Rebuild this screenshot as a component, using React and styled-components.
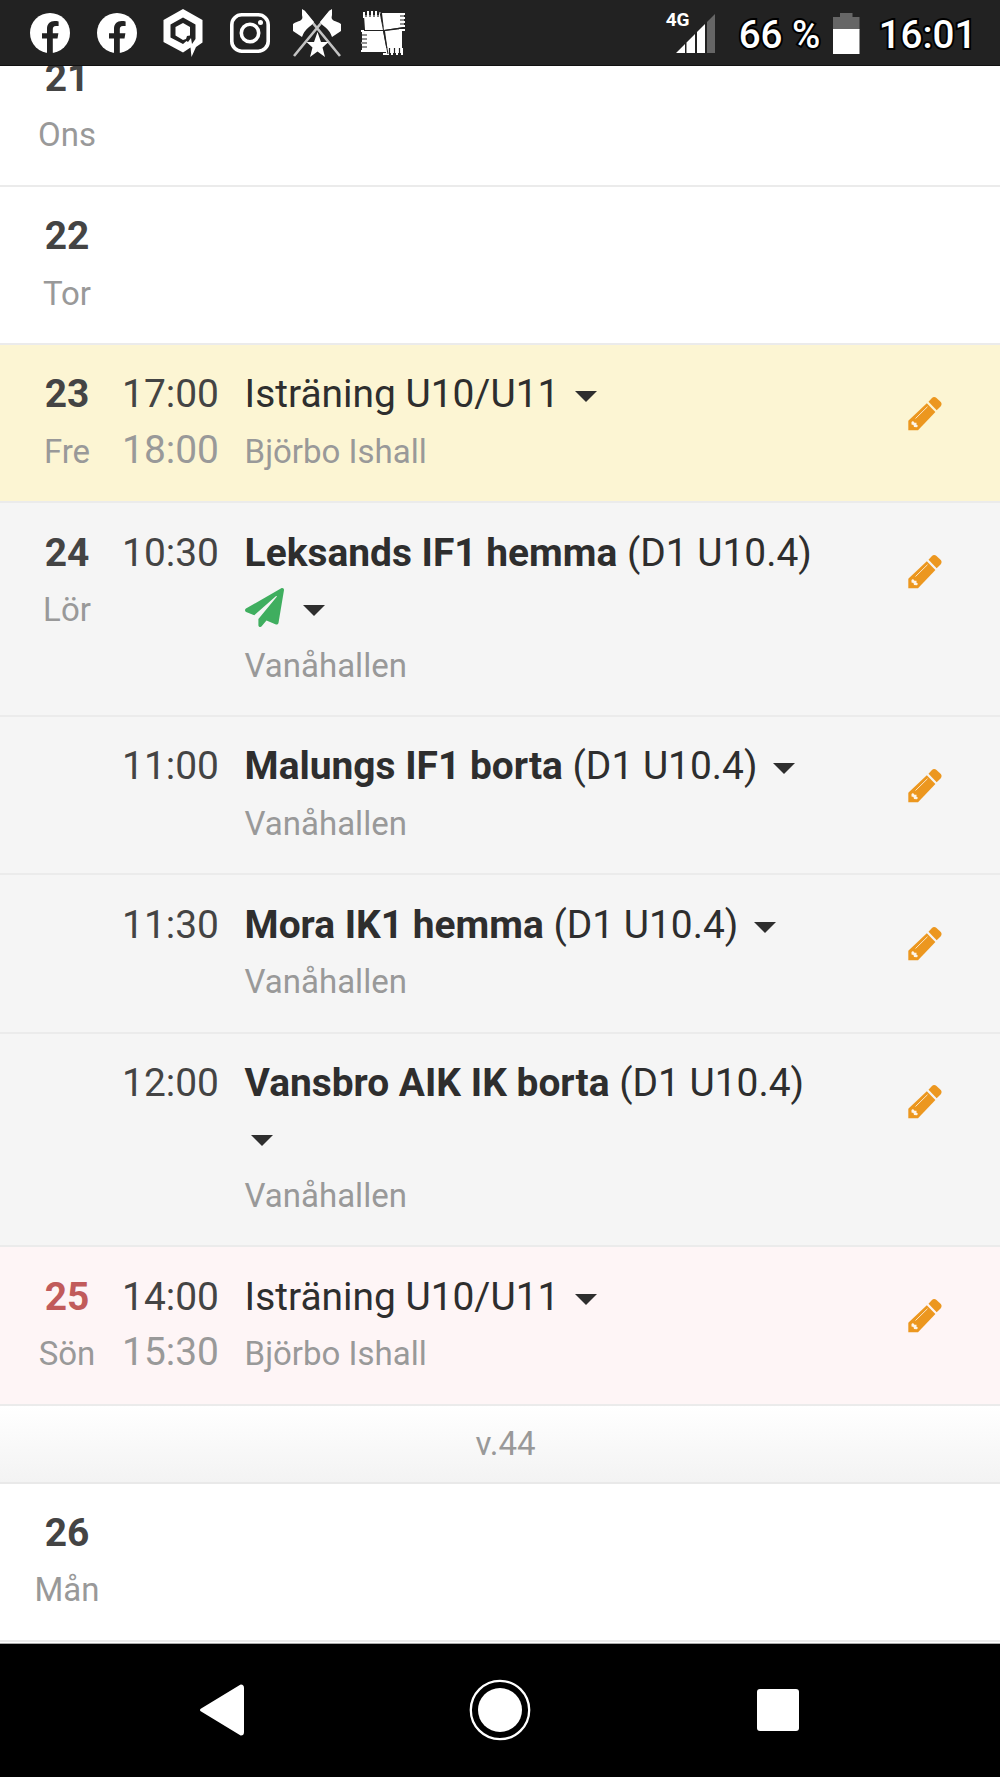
import React from 'react'
import styled, { createGlobalStyle } from 'styled-components'

const days = [
  { date: '21', day: 'Ons' },
  { date: '22', day: 'Tor' },
  { date: '23', day: 'Fre', tone: 'today', start: '17:00', end: '18:00', title: 'Isträning U10/U11', place: 'Björbo Ishall' },
  { date: '24', day: 'Lör', tone: 'saturday', start: '10:30', match: 'Leksands IF1 hemma', series: '(D1 U10.4)', sent: true, place: 'Vanåhallen' },
  { tone: 'saturday', start: '11:00', match: 'Malungs IF1 borta', series: '(D1 U10.4)', place: 'Vanåhallen' },
  { tone: 'saturday', start: '11:30', match: 'Mora IK1 hemma', series: '(D1 U10.4)', place: 'Vanåhallen' },
  { tone: 'saturday', start: '12:00', match: 'Vansbro AIK IK borta', series: '(D1 U10.4)', place: 'Vanåhallen' },
  { date: '25', day: 'Sön', tone: 'sunday', start: '14:00', end: '15:30', title: 'Isträning U10/U11', place: 'Björbo Ishall' },
]

const tones = {
  today: '#fcf5d3',
  saturday: '#f5f5f5',
  sunday: '#fef5f6',
}

const facebook = (
  <svg width="40" height="40" viewBox="0 0 40 40">
    <circle cx="20" cy="20" r="20" fill="#fff" />
    <path d="M17 40V25.500h-5v-5.300h5v-4.400c0-5 3-7.800 7.600-7.800 1.500 0 3 .2 4 .4v4.700h-2.600c-2.500 0-3.200 1.500-3.200 3.100v4h5.600l-.9 5.300h-4.700V40z" fill="#222" />
  </svg>
)

const hexagon = (
  <svg width="40" height="48" viewBox="0 0 40 48">
    <path d="M20 0L39.500 11V33.500L33 38L28.500 48L27.500 38.500L20 43.500L.5 33V11z" fill="#fff" />
    <path d="M20 8.500L32.500 15.500V30L29 35L28 29L25 33L23.500 32L20 35L7.500 28.500V15.500z" fill="#222" />
    <path d="M20 14L27 18V26.500L24 27L23 30L20 31L12.500 26.500V18z" fill="#fff" />
  </svg>
)

const instagram = (
  <svg width="40" height="40" viewBox="0 0 40 40" fill="none" stroke="#fff" strokeWidth="3.600">
    <rect x="1.800" y="1.800" width="36.400" height="36.400" rx="10" />
    <circle cx="20" cy="20" r="8.700" />
    <circle cx="30.500" cy="9.500" r="2.500" fill="#fff" stroke="none" />
  </svg>
)

const flags = (
  <svg width="48" height="48" viewBox="0 0 48 48" fill="#fff">
    <path d="M1 47L38 2M47 47L10 2" stroke="#c4c4c4" strokeWidth="2.600" />
    <path d="M9 0L12 2L21 13Q19 16 16 18Q11 22 9 28L0 22V15C5 11 11 13 9 6z" />
    <path d="M39 0L36 2L27 13Q29 16 32 18Q37 22 39 28L48 22V15C43 11 37 13 39 6z" />
    <path d="M24.500 23L28 33H35.500L29.500 38.500L32 48L24.500 42.500L17 48L19.500 38.500L13.500 33H21z" />
  </svg>
)

const patch = (
  <svg width="44" height="46" viewBox="0 0 44 46">
    <path d="M3 5H19L23 20H4z M21 3H43V17L23 20z M1 21H22L26 42H1z M24 21L41 19V43H27z" fill="#fff" />
    <path d="M3 2V8M7 1V8M11 1V8M15 1V8M19 2V8M38 4H44M38 8H44M38 12H44M38 16H44M38 20H44M0 21H6M22 44H28M26 38V45M31 38V45M36 38V45M41 38V45M0 41H5M0 33H5" stroke="#fff" strokeWidth="2" />
    <path d="M19 2L27 44M3 20.500H23L43 17.500" stroke="#222" strokeWidth="1" fill="none" />
    <path d="M5 3V7M9 3V7M13 3V7M17 3V7M39 6H43M39 10H43M39 14H43M0 25H6M0 29H6M0 33H6M0 37H6M28.500 38V43M33.500 38V43M38.500 38V43" stroke="#222" strokeWidth="1.200" />
  </svg>
)

const signal = (
  <svg width="39" height="39" viewBox="0 0 39 39" fill="#fff">
    <path d="M0 39L9 30V39z M10.500 28.500L19 20V39H10.500z M21 18L29 10V39H21z" />
    <path d="M31 8L39 0V39H31z" fill="#666" />
  </svg>
)

const battery = (
  <svg width="27" height="41" viewBox="0 0 27 41">
    <path d="M7 0H19.500V4H26.500V17H0V4H7z" fill="#666" />
    <path d="M0 16H26.500V41H0z" fill="#fff" />
  </svg>
)

const pencil = (
  <svg width="34" height="34" viewBox="0 0 34 34">
    <path d="M23.500 1.500Q26-1 28.500 1L32.800 5Q34.500 7.300 32.500 9.500L28.700 13.200L20.500 4.800z" fill="#ec971f" />
    <path d="M18.800 6.300L27.400 14.900L10 33.300H.3V23.800z" fill="#ec971f" />
    <path d="M7.500 21.500L19.500 9.700" stroke="#fff" strokeOpacity=".75" strokeWidth="1" />
    <path d="M3.500 25L5 24L6.500 25.800H8.500V27.800L10 28.700L9 30.300L6 30L5.500 28L3.500 27.500z" fill="#fff" fillOpacity=".9" />
  </svg>
)

const plane = (
  <svg width="39" height="39" viewBox="0 0 512 512">
    <path d="M476 3.200L12.500 270.600c-18.100 10.400-15.800 35.600 2.200 43.200L121 358.400l287.300-253.200c5.500-4.900 13.300 2.600 8.600 8.300L176 407v80.500c0 23.600 28.500 32.900 42.500 15.800L282 426l124.600 52.200c14.200 6 30.400-2.900 33-18.200l72-432C515 7.800 493.300-6.800 476 3.200z" fill="#3fae5f" />
  </svg>
)

const back = (
  <svg width="46" height="54" viewBox="0 0 46 54">
    <path d="M42 3L2.500 27L42 51Q43.500 51 43.500 49V5Q43.500 3 42 3z" fill="#fff" stroke="#fff" strokeWidth="3" strokeLinejoin="round" />
  </svg>
)

const home = (
  <svg width="62" height="62" viewBox="0 0 62 62">
    <circle cx="31" cy="31" r="29.200" fill="none" stroke="#fff" strokeWidth="2.300" />
    <circle cx="31" cy="31" r="22" fill="#fff" />
  </svg>
)

const recent = (
  <svg width="42" height="42" viewBox="0 0 42 42">
    <rect width="42" height="42" rx="3" fill="#fff" />
  </svg>
)

function EventRow({ item }) {
  return (
    <Row $tone={item.tone}>
      <DateCell>
        <DayNumber $red={item.tone === 'sunday'}>{item.date}</DayNumber>
        <div><Muted>{item.day}</Muted></div>
      </DateCell>
      <TimeCell>
        <div>{item.start}</div>
        <EndTime>{item.end}</EndTime>
      </TimeCell>
      {item.start && (
        <EventCell>
          <Title>
            {item.match && <b>{item.match}</b>} {item.title || item.series}{' '}
            {item.sent && <Sent>{plane}</Sent>}{' '}
            <Caret />
          </Title>
          <div><Muted>{item.place}</Muted></div>
        </EventCell>
      )}
      {item.start && <EditButton aria-label="Redigera">{pencil}</EditButton>}
    </Row>
  )
}

function App() {
  return (
    <Phone>
      <GlobalStyle />
      <StatusBar>
        <Notifications>
          <Slot>{facebook}</Slot>
          <Slot>{facebook}</Slot>
          <Slot>{hexagon}</Slot>
          <Slot>{instagram}</Slot>
          <Slot>{flags}</Slot>
          <Slot>{patch}</Slot>
        </Notifications>
        <System>
          <Network>
            <span>4G</span>
            {signal}
          </Network>
          <StatusText $width="82px">66 %</StatusText>
          {battery}
          <StatusText $width="95px">16:01</StatusText>
        </System>
      </StatusBar>
      <Calendar>
        <Rows>
          {days.map((item, index) => <EventRow key={index} item={item} />)}
          <Week><Muted>v.44</Muted></Week>
          <EventRow item={{ date: '26', day: 'Mån' }} />
        </Rows>
      </Calendar>
      <NavBar>
        <NavButton>{back}</NavButton>
        <NavButton>{home}</NavButton>
        <NavButton>{recent}</NavButton>
      </NavBar>
    </Phone>
  )
}

const GlobalStyle = createGlobalStyle`
  * {
    box-sizing: border-box;
  }

  body {
    margin: 0;
    background: #fff;
  }

  svg {
    display: block;
    flex-shrink: 0;
  }
`;

const Phone = styled.div`
  display: flex;
  flex-direction: column;
  width: 1000px;
  height: 1777px;
  overflow: hidden;
  font-family: Roboto, sans-serif;
  color: #444;
`;

const StatusBar = styled.header`
  display: flex;
  justify-content: space-between;
  flex: 0 0 66px;
  padding: 1px 26.300px 0 16.700px;
  color: #fff;
  background: #222;
  border-bottom: 1px solid #111;
`;

const Notifications = styled.div`
  display: flex;
  align-items: center;
`;

const Slot = styled.div`
  display: flex;
  justify-content: center;
  width: 66.700px;
`;

const System = styled.div`
  display: flex;
  align-items: center;
`;

const Network = styled.div`
  display: flex;
  margin-right: 24px;

  span {
    width: 23px;
    margin: -5px -13px 0 0;
    font-size: 19px;
    font-weight: 700;
    line-height: 22px;
    white-space: nowrap;
  }
`;

const StatusText = styled.span`
  width: ${props => props.$width};
  margin-right: 12px;
  padding-top: 3px;
  font-size: 38.500px;
  font-weight: 500;
  white-space: nowrap;
  paint-order: stroke;
  -webkit-text-stroke: 4px #000;

  &:last-child {
    margin: 0 0 0 19px;
  }
`;

const Calendar = styled.main`
  flex: 0 0 1578px;
  overflow: hidden;
  border-bottom: 1px solid #aaa;
`;

const Rows = styled.div`
  margin-top: -37.600px;
`;

const Row = styled.section`
  display: grid;
  grid-template-columns: 100px 107px 590px 1fr;
  min-height: 158.300px;
  padding: 21.300px 0 24px 17px;
  font-size: 38.900px;
  line-height: 55.500px;
  background: ${props => tones[props.$tone] || '#fff'};
  border-bottom: 2px solid #ebebeb;
`;

const DateCell = styled.div`
  text-align: center;
`;

const DayNumber = styled.div`
  font-weight: 700;
  color: ${props => props.$red ? '#c15b5b' : '#444'};
`;

const TimeCell = styled.div`
  text-align: center;
`;

const EndTime = styled.div`
  color: #999;
`;

const EventCell = styled.div`
  padding-left: 20.600px;
`;

const Title = styled.div`
  color: #2e2e2e;
`;

/* line-height 1 keeps the smaller text from stretching its line */
const Muted = styled.span`
  font-size: 33px;
  line-height: 1;
  color: #999;
`;

const Sent = styled.span`
  display: inline-block;
  vertical-align: -6px;
  margin-right: 4px;
`;

const Caret = styled.i`
  display: inline-block;
  margin-left: 6px;
  vertical-align: 5px;
  border: 11px solid transparent;
  border-top-color: #2e2e2e;
  border-bottom: 0;
`;

const EditButton = styled.button`
  justify-self: center;
  align-self: start;
  margin: 30.300px 0 0 35px;
  padding: 0;
  border: none;
  background: none;
`;

const Week = styled.div`
  height: 77.800px;
  padding: 8px 0 0 11px;
  font-size: 38.900px;
  line-height: 55.500px;
  text-align: center;
  background: linear-gradient(#fff, #f3f3f3);
  border-bottom: 2px solid #e9e9e9;
`;

const NavBar = styled.nav`
  display: grid;
  grid-template-columns: repeat(3, 278px);
  justify-content: center;
  align-items: center;
  flex: 1;
  padding-bottom: 1px;
  background: #000;
`;

const NavButton = styled.button`
  display: flex;
  justify-content: center;
  padding: 0;
  border: none;
  background: none;
`;

export default App
